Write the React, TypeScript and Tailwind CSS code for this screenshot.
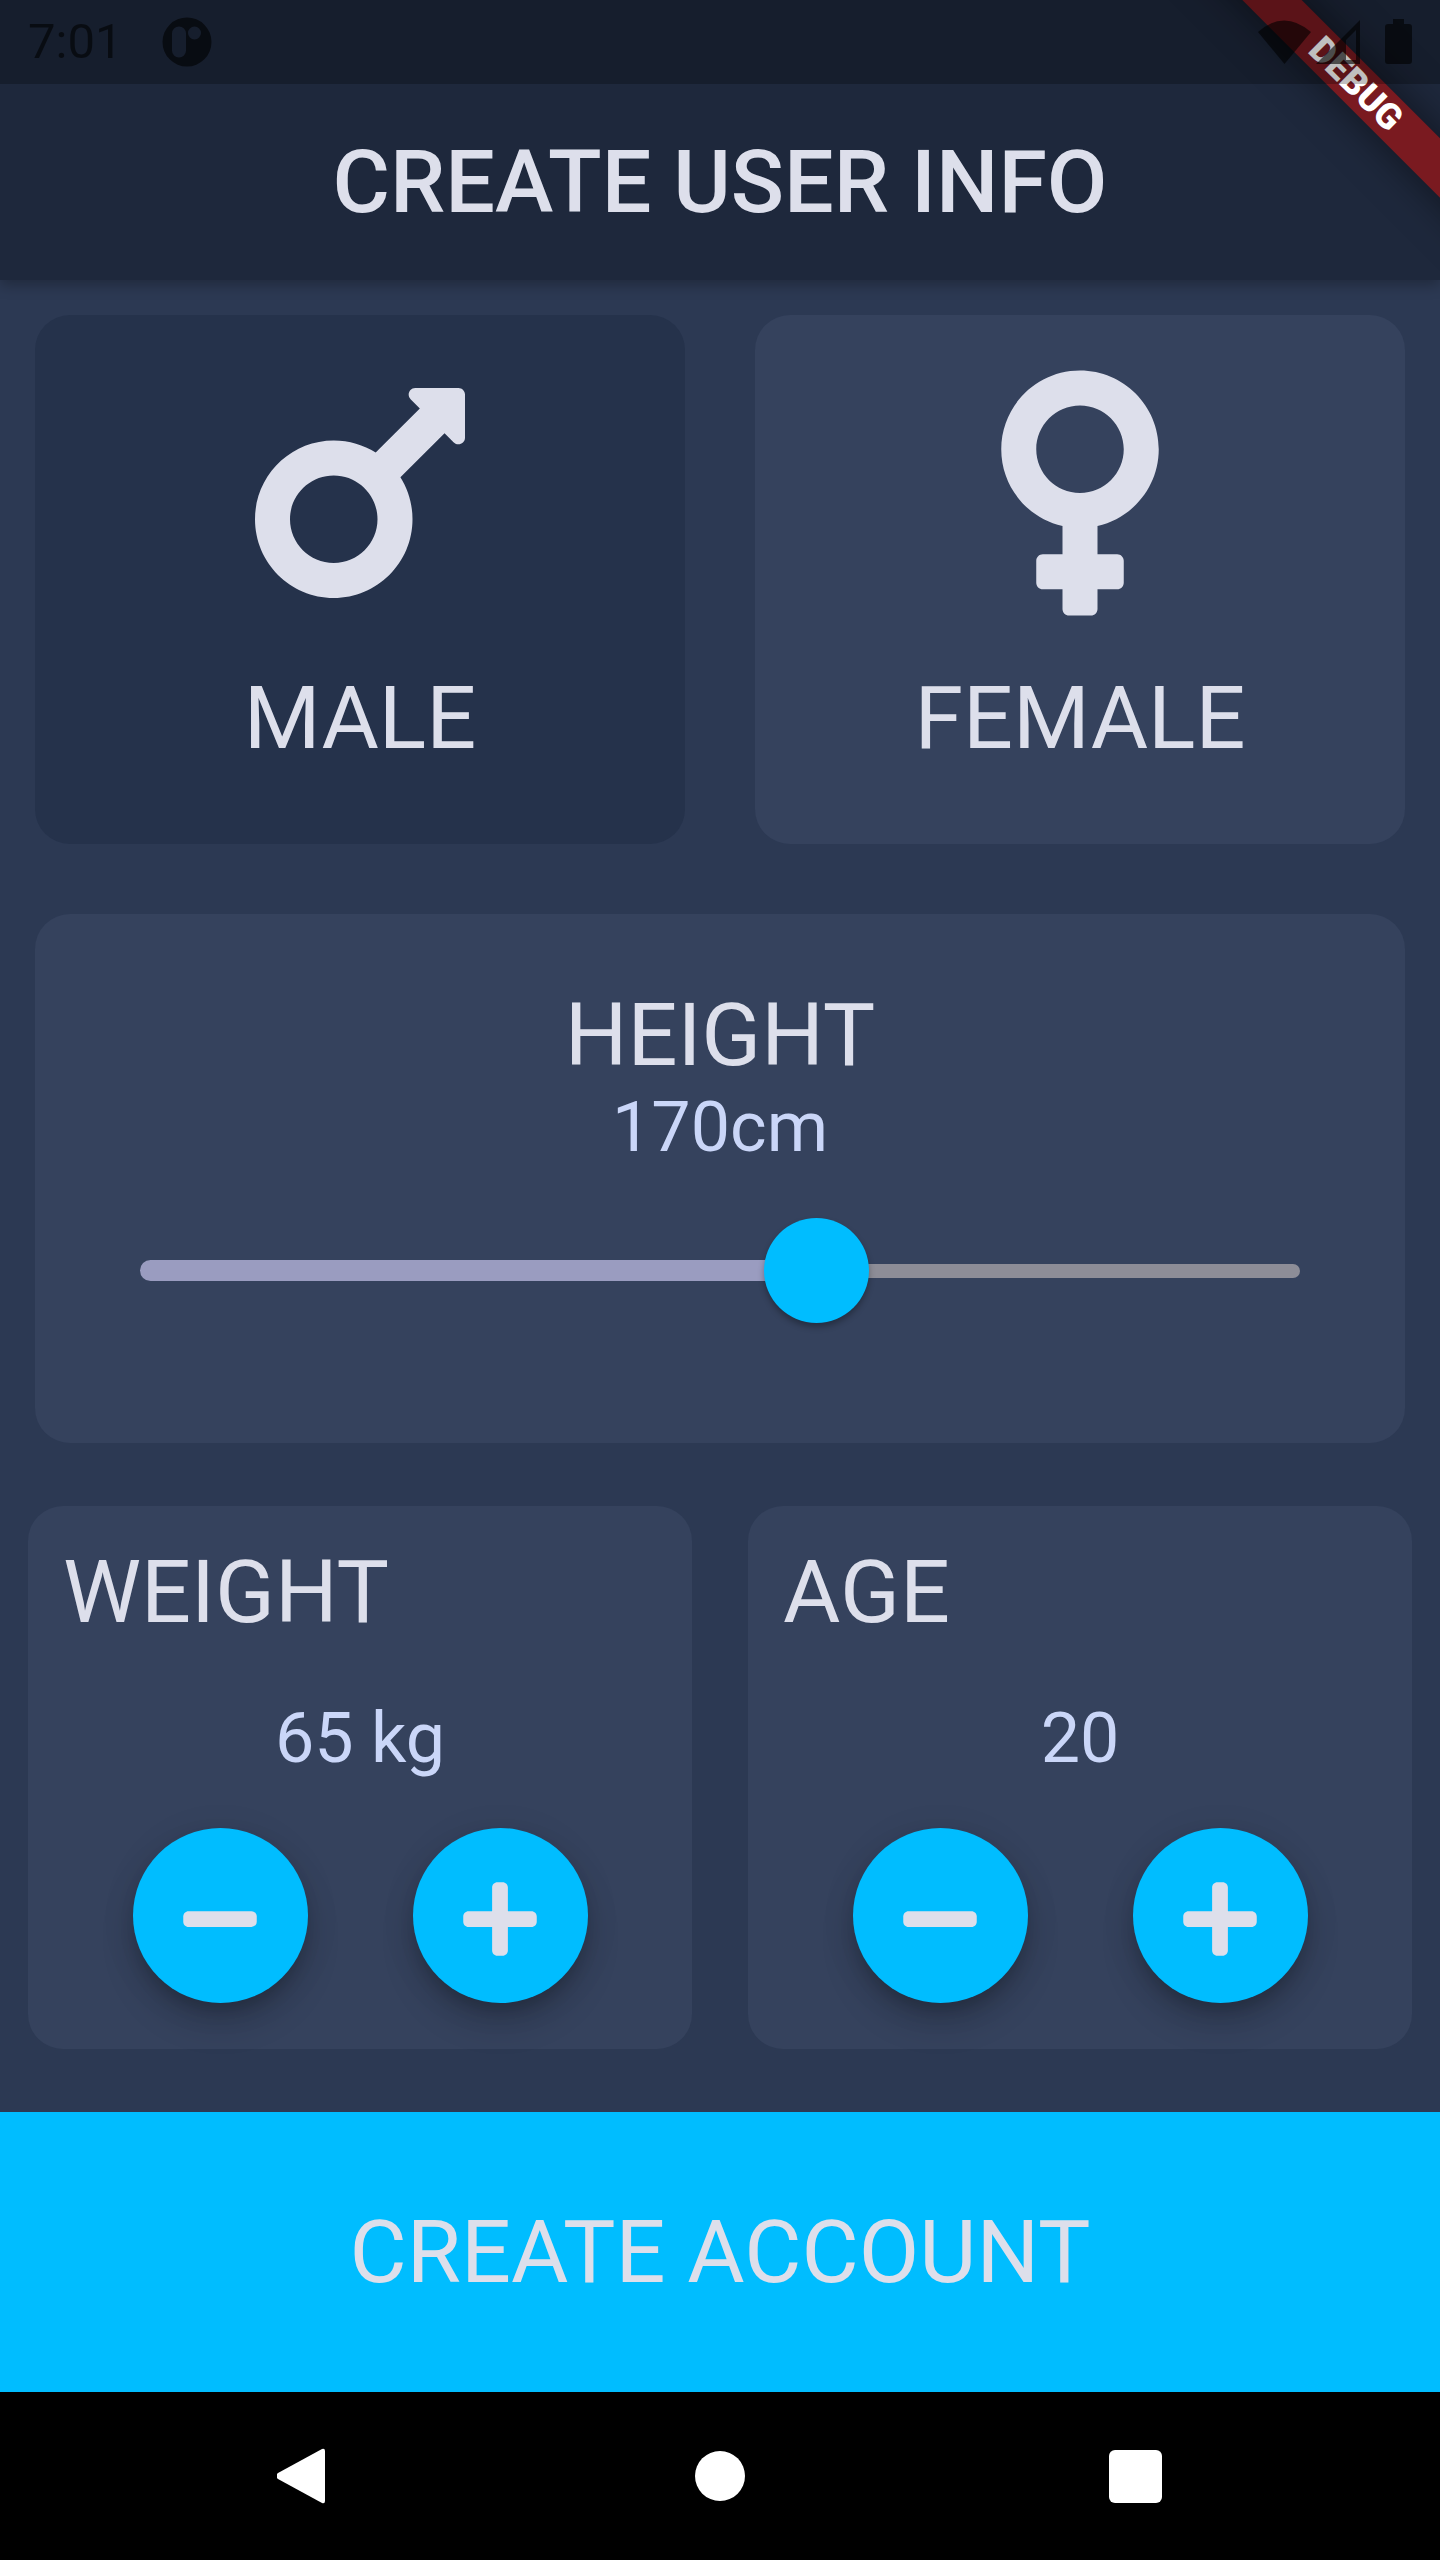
import { useState } from "react";
import type { ReactNode } from "react";
import { FaMars, FaMinus, FaPlus, FaVenus } from "react-icons/fa";

const MIN_HEIGHT = 100;
const MAX_HEIGHT = 220;

function StatusBar() {
  return (
    <div className="absolute inset-x-0 top-0 z-20 flex h-[84px] items-center bg-black/25 px-7 text-black/60">
      <span className="text-[49px] leading-[58px]">7:01</span>
      <svg className="ml-10 h-[50px] w-[50px]" viewBox="0 0 50 50" fill="currentColor" fillRule="evenodd" aria-hidden="true">
        <path d="M25 .5a24.500 24.500 0 1 1 0 49a24.500 24.500 0 1 1 0-49ZM17 9.500a7 7 0 0 0-7 7v17a7 7 0 0 0 14 0v-17a7 7 0 0 0-7-7ZM32.500 9.500a6.500 6.500 0 1 0 0 13a6.500 6.500 0 1 0 0-13Z" />
      </svg>
      <svg className="ml-auto h-[46px] w-[156px]" viewBox="0 0 156 46" fill="currentColor" fillRule="evenodd" aria-hidden="true">
        <path d="M2 13Q28-10 55 13L28.500 45Z" />
        <path d="M60 45L104 1V45ZM90 21V41H100V11Z" />
        <path d="M137 0h11v5h5q3 0 3 3v34q0 3-3 3h-21q-3 0-3-3v-34q0-3 3-3h5Z" />
      </svg>
    </div>
  );
}

function DebugRibbon() {
  return (
    <div className="pointer-events-none absolute top-0 right-0 z-10 h-[320px] w-[320px] overflow-hidden">
      <div className="absolute top-[63px] -right-[126px] flex h-[42px] w-[420px] rotate-45 items-center justify-center bg-[#7a1a20] text-[36px] leading-[42px] font-black text-white shadow-[0_0_40px_rgba(0,0,0,0.5)]">
        DEBUG
      </div>
    </div>
  );
}

function GenderCard({
  label,
  icon,
  selected,
  onSelect,
}: {
  label: string;
  icon: ReactNode;
  selected: boolean;
  onSelect: () => void;
}) {
  return (
    <button
      type="button"
      aria-pressed={selected}
      onClick={onSelect}
      className={`m-[35px] flex flex-1 flex-col items-center justify-center gap-[34px] rounded-[35px] pb-[38px] ${
        selected ? "bg-[#25324b]" : "bg-[#35425d]"
      }`}
    >
      {icon}
      <span className="text-[88px] leading-[102px]">{label}</span>
    </button>
  );
}

function RoundButton({ label, onClick, children }: { label: string; onClick: () => void; children: ReactNode }) {
  return (
    <button
      type="button"
      aria-label={label}
      onClick={onClick}
      className="flex h-[175px] w-[175px] items-center justify-center rounded-full bg-[#00bdff] pt-[6px] shadow-[0_10px_17px_-4px_rgba(0,0,0,0.2),0_21px_35px_rgba(0,0,0,0.14),0_4px_40px_rgba(0,0,0,0.06)]"
    >
      {children}
    </button>
  );
}

function CounterCard({
  title,
  value,
  unit,
  onChange,
}: {
  title: string;
  value: number;
  unit: string;
  onChange: (value: number) => void;
}) {
  return (
    <section className="m-7 flex flex-1 flex-col rounded-[35px] bg-[#35425d] px-[35px] pt-[35px] pb-[46px]">
      <h2 className="text-[88px] leading-[102px]">{title}</h2>
      <output className="mt-[54px] text-center text-[70px] leading-[82px] text-[#cad6f8]">
        {value}
        {unit}
      </output>
      <div className="mt-[49px] flex justify-center gap-[105px]">
        <RoundButton label={`Decrease ${title.toLowerCase()}`} onClick={() => onChange(value - 1)}>
          <FaMinus className="h-[84px] w-auto" />
        </RoundButton>
        <RoundButton label={`Increase ${title.toLowerCase()}`} onClick={() => onChange(value + 1)}>
          <FaPlus className="h-[84px] w-auto" />
        </RoundButton>
      </div>
    </section>
  );
}

function HeightCard() {
  const [height, setHeight] = useState(170);
  const percent = ((height - MIN_HEIGHT) / (MAX_HEIGHT - MIN_HEIGHT)) * 100;
  return (
    <section className="m-[35px] flex flex-1 flex-col items-stretch rounded-[35px] bg-[#35425d] px-[52px] pt-[70px]">
      <label htmlFor="height" className="text-center text-[88px] leading-[102px]">
        HEIGHT
      </label>
      <output htmlFor="height" className="text-center text-[70px] leading-[82px] text-[#cad6f8]">
        {height}cm
      </output>
      <div className="mt-[50px] grid">
        <div className="col-start-1 row-start-1 flex items-center px-[53px]">
          <div className="h-[21px] rounded-l-full bg-[#9a9cc0]" style={{ width: `${percent}%` }} />
          <div className="h-[14px] flex-1 rounded-r-full bg-[#8d8d97]" />
        </div>
        <input
          id="height"
          type="range"
          min={MIN_HEIGHT}
          max={MAX_HEIGHT}
          value={height}
          onChange={(event) => setHeight(Number(event.target.value))}
          className="col-start-1 row-start-1 h-[105px] w-full appearance-none bg-transparent [&::-webkit-slider-thumb]:h-[105px] [&::-webkit-slider-thumb]:w-[105px] [&::-webkit-slider-thumb]:appearance-none [&::-webkit-slider-thumb]:rounded-full [&::-webkit-slider-thumb]:bg-[#00bdff] [&::-webkit-slider-thumb]:shadow-[0_4px_6px_rgba(0,0,0,0.3)]"
        />
      </div>
    </section>
  );
}

function NavigationBar() {
  return (
    <nav className="flex h-[168px] items-center justify-center gap-[135px] bg-black text-white">
      <button type="button" aria-label="Back" className="flex w-[280px] justify-center">
        <svg className="h-[56px] w-[56px]" viewBox="0 0 56 56" fill="currentColor">
          <path d="M45 1Q48 0 48 3V53Q48 56 45 55L1 31Q-3 28 1 25Z" />
        </svg>
      </button>
      <button type="button" aria-label="Home" className="flex w-[280px] justify-center">
        <span className="h-[50px] w-[50px] rounded-full bg-white" />
      </button>
      <button type="button" aria-label="Recent apps" className="flex w-[280px] justify-center">
        <span className="h-[53px] w-[53px] rounded-md bg-white" />
      </button>
    </nav>
  );
}

export default function App() {
  const [gender, setGender] = useState("male");
  const [weight, setWeight] = useState(65);
  const [age, setAge] = useState(20);

  return (
    <div className="relative flex min-h-screen flex-col bg-[#2c3953] font-['Roboto',sans-serif] text-[#dddfeb]">
      <StatusBar />
      <DebugRibbon />
      <header className="bg-[#1e283c] pt-[84px] shadow-[0_4px_14px_rgba(0,0,0,0.3)]">
        <h1 className="py-[47px] text-center text-[88px] leading-[102px] font-medium">CREATE USER INFO</h1>
      </header>
      <main className="grid flex-1 auto-rows-fr pb-[35px]">
        <div className="grid grid-cols-2">
          <div className="flex">
            <GenderCard
              label="MALE"
              icon={<FaMars className="h-[280px] w-auto" />}
              selected={gender === "male"}
              onSelect={() => setGender("male")}
            />
          </div>
          <div className="flex">
            <GenderCard
              label="FEMALE"
              icon={<FaVenus className="h-[280px] w-auto" />}
              selected={gender === "female"}
              onSelect={() => setGender("female")}
            />
          </div>
        </div>
        <div className="flex">
          <HeightCard />
        </div>
        <div className="grid grid-cols-2">
          <div className="flex">
            <CounterCard title="WEIGHT" value={weight} unit=" kg" onChange={setWeight} />
          </div>
          <div className="flex">
            <CounterCard title="AGE" value={age} unit="" onChange={setAge} />
          </div>
        </div>
      </main>
      <button type="button" className="bg-[#00bdff] py-[89px] text-[88px] leading-[102px]">
        CREATE ACCOUNT
      </button>
      <NavigationBar />
    </div>
  );
}
